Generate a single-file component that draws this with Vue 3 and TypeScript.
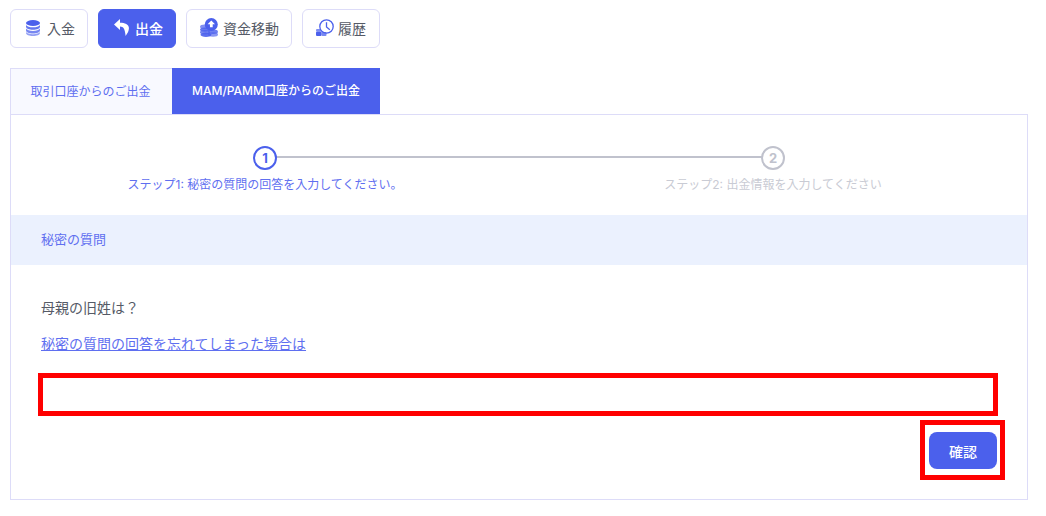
<script setup lang="ts">
const tabs: string[] = ['取引口座からのご出金', 'MAM/PAMM口座からのご出金']
</script>

<template>
  <div class="page">
    <nav class="actions">
      <button class="action a1">
        <svg viewBox="0 0 14 16" width="14" height="16">
          <ellipse cx="7" cy="3" rx="7" ry="3" fill="#4b60ec" />
          <path d="M0 5c1 1.500 3.700 2.300 7 2.300S13 6.500 14 5v1.800C14 8.500 10.900 9.800 7 9.800S0 8.500 0 6.800z" fill="#4b60ec" opacity=".85" />
          <path d="M0 8.600c1 1.500 3.700 2.300 7 2.300s6-.8 7-2.300v1.900c0 1.700-3.100 3-7 3s-7-1.300-7-3z" fill="#4b60ec" opacity=".75" />
          <path d="M0 12c1 1.400 3.700 2.200 7 2.200s6-.8 7-2.200v1c0 1.700-3.100 3-7 3s-7-1.300-7-3z" fill="#4b60ec" opacity=".6" />
        </svg>
        入金
      </button>
      <button class="action a2 active">
        <svg viewBox="0 0 15 17" width="15" height="17">
          <path d="M6 0 0 5.600l6 5.400V7.400c3.300.2 5 2 5.600 9.600 2.300-3 3.500-5.600 3.300-8.200C14.600 5.100 11.100 3.800 6 3.700z" fill="#fff" />
        </svg>
        出金
      </button>
      <button class="action a3">
        <svg viewBox="0 0 18 19" width="18" height="19">
          <circle cx="11.300" cy="6.500" r="6.500" fill="#4b60ec" />
          <path d="M11.300 2.600 15 6.300h-2.300v2.900H9.900V6.300H7.600z" fill="#fff" />
          <ellipse cx="5" cy="8.800" rx="5" ry="2.200" fill="#4b60ec" opacity=".7" />
          <ellipse cx="5" cy="11.600" rx="5" ry="2.200" fill="#4b60ec" opacity=".85" />
          <ellipse cx="5" cy="14.300" rx="5" ry="2.200" fill="#4b60ec" opacity=".75" />
          <ellipse cx="6" cy="16.800" rx="5.500" ry="2.200" fill="#4b60ec" opacity=".9" />
          <ellipse cx="13" cy="13.800" rx="5" ry="2.200" fill="#4b60ec" opacity=".8" />
          <ellipse cx="13" cy="16.500" rx="5" ry="2.200" fill="#4b60ec" opacity=".65" />
        </svg>
        資金移動
      </button>
      <button class="action a4">
        <svg viewBox="0 0 18 17" width="18" height="17">
          <circle cx="10.500" cy="7.500" r="6.700" fill="#fff" stroke="#4b60ec" stroke-width="1.300" />
          <path d="M10.500 3.200V8l3.300 2.800" fill="none" stroke="#4b60ec" stroke-width="1.300" />
          <rect x="0" y="10" width="5" height="2.500" rx="1" fill="#4b60ec" opacity=".7" />
          <rect x="0" y="12.500" width="5.500" height="4.500" rx="1" fill="#4b60ec" />
          <rect x="5.500" y="13" width="5" height="4" rx="1" fill="#4b60ec" opacity=".75" />
        </svg>
        履歴
      </button>
    </nav>

    <div class="tabs">
      <div class="tab first">{{ tabs[0] }}</div>
      <div class="tab current">{{ tabs[1] }}</div>
    </div>

    <section class="panel">
      <div class="steps">
        <div class="step on">
          <span class="dot">1</span>
          <span class="label">ステップ1: 秘密の質問の回答を入力してください。</span>
        </div>
        <div class="step">
          <span class="dot">2</span>
          <span class="label">ステップ2: 出金情報を入力してください</span>
        </div>
      </div>

      <h2 class="band">秘密の質問</h2>

      <div class="body">
        <p class="question">母親の旧姓は？</p>
        <a class="forgot" href="#">秘密の質問の回答を忘れてしまった場合は</a>
        <div class="field mark"></div>
        <div class="submit-row">
          <div class="submit-mark mark">
            <button class="submit">確認</button>
          </div>
        </div>
      </div>
    </section>
  </div>
</template>

<style>
html, body { margin: 0; background: #fff; }
</style>

<style scoped>
.page {
  width: 1018px;
  padding: 9px 0 0 10px;
  font-family: Inter, "Noto Sans CJK JP", sans-serif;
  font-size: 14px;
  color: #555a66;
}
.actions { display: flex; gap: 10px; height: 39px; }
.action {
  display: flex;
  align-items: center;
  padding: 0 0 2px;
  background: #fff;
  border: 1px solid #dddcf8;
  border-radius: 6px;
  font: inherit;
  color: #555a66;
}
.action svg { flex: none; }
.a1 { width: 78px; padding-left: 15px; gap: 7px; }
.a2 { width: 78px; padding-left: 15px; gap: 6px; }
.a3 { width: 106px; padding-left: 13px; gap: 5px; }
.a4 { width: 78px; padding-left: 13px; gap: 4px; }
.action.active { background: #4b60ec; border-color: #4b60ec; color: #fff; font-weight: 500; }

.tabs { display: flex; margin-top: 20px; height: 46px; }
.tab { display: flex; align-items: center; justify-content: center; font-size: 12px; padding-bottom: 3px; box-sizing: border-box; }
.tab.first {
  width: 162px;
  padding-right: 2px;
  background: #f8f9ff;
  color: #5f6ff0;
  border: 1px solid #dddcf8;
  border-bottom: 0;
  border-right: 0;
}
.tab.current { width: 208px; background: #4b60ec; color: #fff; font-weight: 500; }

.panel {
  box-sizing: border-box;
  height: 386px;
  border: 1px solid #dddcf8;
}
.steps { display: flex; padding-top: 31px; height: 100px; box-sizing: border-box; }
.step {
  flex: 1;
  position: relative;
  display: flex;
  flex-direction: column;
  align-items: center;
  font-size: 12px;
  color: #c9cbd4;
}
.step.on { color: #5f6ff0; }
.step.on::after {
  content: "";
  position: absolute;
  left: 50%;
  top: 10px;
  width: 100%;
  height: 2px;
  background: #c0c2cd;
}
.dot {
  position: relative;
  z-index: 1;
  box-sizing: border-box;
  width: 24px;
  height: 24px;
  display: flex;
  align-items: center;
  justify-content: center;
  border: 2px solid #c0c2cd;
  border-radius: 50%;
  background: #fff;
  font-size: 13px;
  font-weight: 700;
  color: #c0c2cd;
}
.step.on .dot { border-color: #4b60ec; color: #4b60ec; }
.label { margin-top: 6px; line-height: 18px; }

.band {
  margin: 0;
  height: 50px;
  padding: 0 0 3px 30px;
  box-sizing: border-box;
  display: flex;
  align-items: center;
  background: #ebf1fe;
  font-size: 13px;
  font-weight: 400;
  color: #5f6ff0;
}
.body { padding: 33px 30px 0; }
.question { margin: 0; font-size: 14px; line-height: 20px; }
.forgot {
  display: block;
  margin-top: 16px;
  width: max-content;
  font-size: 14px;
  line-height: 20px;
  color: #5f6ff0;
  text-decoration: underline;
}
.field { box-sizing: border-box; height: 43px; margin: 19px 0 0 -3px; width: 960px; }
.mark { border: 5px solid #ff0000; }
.submit-row { display: flex; justify-content: flex-end; margin: 4px -8px 0 0; }
.submit-mark {
  box-sizing: border-box;
  width: 85px;
  height: 60px;
  padding: 7px 3px 0 4px;
}
.submit {
  width: 68px;
  height: 37px;
  border: 0;
  border-radius: 8px;
  background: #4b60ec;
  color: #fff;
  font: inherit;
  font-weight: 500;
}
</style>
